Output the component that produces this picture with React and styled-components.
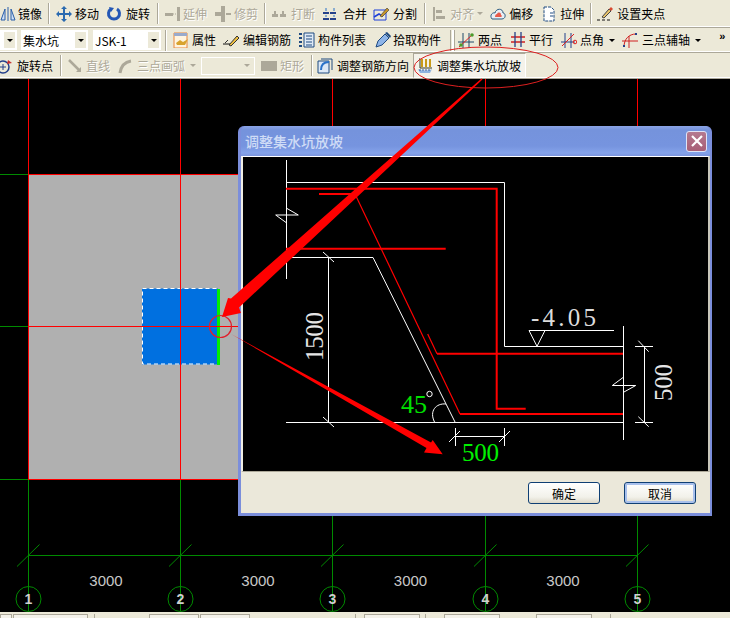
import React from "react";
import styled, { createGlobalStyle, css } from "styled-components";

const Global = createGlobalStyle`
  html, body { margin: 0; padding: 0; background: #000; }
  body { font-family: "Noto Sans CJK SC", "Liberation Sans", sans-serif; font-size: 12px; }
`;

const Page = styled.div`
  position: relative;
  width: 730px;
  height: 618px;
  overflow: hidden;
  display: flex;
  flex-direction: column;
  background: #ece9d8;
`;

const ToolRow = styled.div`
  display: flex;
  align-items: center;
  box-sizing: border-box;
  height: ${p => p.$h}px;
  flex: none;
  background: #ece9d8;
  border-bottom: 1px solid #aca899;
  box-shadow: inset 0 -1px 0 #fff;
  white-space: nowrap;
  overflow: hidden;
`;

const Tool = styled.div`
  display: flex;
  align-items: center;
  flex: none;
  height: 18px;
  margin-left: ${p => p.$ml || 0}px;
  gap: ${p => p.$gap || 3}px;
  line-height: 18px;
  color: ${p => (p.$off ? "#aca899" : "#000")};
  text-shadow: ${p => (p.$off ? "1px 1px 0 #fff" : "none")};
`;

const Pressed = styled(Tool)`
  height: 25px;
  width: 113px;
  box-sizing: border-box;
  padding-left: 3px;
  background: #f4f2ea;
  border: 1px solid;
  border-color: #aca899 #fff #fff #aca899;
`;

const Sep = styled.div`
  flex: none;
  width: ${p => (p.$double ? 4 : 2)}px;
  height: 21px;
  margin-left: ${p => p.$ml || 0}px;
  box-sizing: border-box;
  border-left: 1px solid #aca899;
  border-right: ${p => (p.$double ? "2px" : "1px")} solid #fff;
  ${p => p.$double && css`box-shadow: 1px 0 0 #aca899;`}
`;

const Combo = styled.div`
  flex: none;
  display: flex;
  align-items: center;
  justify-content: space-between;
  box-sizing: border-box;
  margin-left: ${p => p.$ml || 0}px;
  width: ${p => p.$w}px;
  height: ${p => (p.$off ? 18 : 20)}px;
  padding: 0 2px;
  background: ${p => (p.$off ? "#ece9d8" : "#fff")};
  border: ${p => (p.$off ? "1px solid #fff" : "none")};
  font-size: 12px;
`;

const DropCell = styled.span`
  flex: none;
  width: 11px;
  height: 16px;
  display: flex;
  align-items: center;
  justify-content: center;
  background: ${p => (p.$off ? "transparent" : "#ece9d8")};
`;

const Caret = styled.span`
  flex: none;
  width: 0;
  height: 0;
  margin-left: ${p => p.$ml || 0}px;
  border-left: 3px solid transparent;
  border-right: 3px solid transparent;
  border-top: 3px solid ${p => (p.$off ? "#aca899" : "#000")};
`;

const Chevrons = styled.span`
  flex: none;
  margin-left: ${p => p.$ml}px;
  margin-top: -8px;
  font: bold 11px "Liberation Sans", sans-serif;
  letter-spacing: -1px;
`;

const IconBox = styled.svg`
  flex: none;
  width: 16px;
  height: 16px;
  display: block;
`;

const Canvas = styled.svg`
  display: block;
  flex: none;
  width: 730px;
  height: 533px;
  background: #000;
`;

const AxisLabel = styled.text`
  font: 15px "Liberation Sans", sans-serif;
  fill: #c8c8c8;
  text-anchor: middle;
`;

const AxisNum = styled.text`
  font: bold 14px "Liberation Sans", sans-serif;
  fill: #cfcfcf;
  text-anchor: middle;
`;

const StatusBar = styled.div`
  flex: 1;
  display: flex;
  align-items: flex-start;
  padding-top: 2px;
  background: #ece9d8;
`;

const StatusCell = styled.div`
  flex: none;
  margin-left: ${p => p.$ml}px;
  width: ${p => p.$w}px;
  height: 10px;
  box-sizing: border-box;
  border: 1px solid #aca899;
  background: #f4f2ea;
`;

const StatusSep = styled.div`
  flex: none;
  margin-left: ${p => p.$ml}px;
  width: 1px;
  height: 10px;
  background: #aca899;
`;

const Dialog = styled.div`
  position: absolute;
  left: 238px;
  top: 126px;
  width: 474px;
  height: 390px;
  box-sizing: border-box;
  display: flex;
  flex-direction: column;
  border: solid #7b8edb;
  border-width: 0 2px 3px 3px;
  border-radius: 6px 6px 0 0;
  background: #7b8edb;
`;

const TitleBar = styled.div`
  flex: none;
  height: 30px;
  box-sizing: border-box;
  padding: 0 3px 0 4px;
  display: flex;
  align-items: center;
  justify-content: space-between;
  border-radius: 5px 5px 0 0;
  background: linear-gradient(#8ba4e6 0, #7593dc 4px, #7694df 20px, #85a3ea 27px, #7b94dd 30px);
`;

const TitleText = styled.span`
  font-size: 14px;
  font-weight: 500;
  color: #cfdcf6;
`;

const CloseBtn = styled.button`
  width: 21px;
  height: 21px;
  padding: 0;
  display: flex;
  align-items: center;
  justify-content: center;
  border: 1px solid #dfe4f6;
  border-radius: 3px;
  background: linear-gradient(#b47a90, #a85f76);
`;

const Frame = styled.div`
  flex: none;
  border: solid #f0eee4;
  border-width: 1px 2px;
  border-top-color: #fff;
  border-bottom-color: #aca899;
  border-right-color: #c8c6ba;
  line-height: 0;
`;

const Drawing = styled.svg`
  display: block;
  width: 465px;
  height: 314px;
  background: #000;
`;

const DimText = styled.text`
  font-family: "Liberation Serif", serif;
  font-size: ${p => p.$size}px;
  fill: ${p => p.$fill};
`;

const Footer = styled.div`
  flex: 1;
  display: flex;
  justify-content: flex-end;
  gap: 24px;
  padding: 10px 14px 0 0;
  background: #ebe8da;
`;

const Btn = styled.button`
  width: 72px;
  height: 22px;
  padding: 0;
  box-sizing: border-box;
  border: 1px solid #0f3f74;
  border-radius: 3px;
  font: 12px "Noto Sans CJK SC", sans-serif;
  color: #000;
  background: linear-gradient(#fff, #f2f1ea 70%, #dcd8c8);
  ${p => p.$focus && css`box-shadow: inset 0 0 0 2px #a8c0ec;`}
`;

const Overlay = styled.svg`
  position: absolute;
  left: 0;
  top: 0;
  width: 730px;
  height: 618px;
  pointer-events: none;
`;

const S = ({ children }) => <IconBox viewBox="0 0 16 16">{children}</IconBox>;
const off = "#aca899";

const icons = {
  mirror: <S><path d="M1 14 5 3v11zM15 14 11 3v11z" fill="#cfe0f6" stroke="#2a5fa8" /><path d="M8 1v14" stroke="#2a5fa8" /></S>,
  move: <S><path d="M8 1v14M1 8h14" stroke="#2a6ab0" strokeWidth="2" /><path d="M8 0l3 3H5zM8 16l3-3H5zM0 8l3-3v6zM16 8l-3-3v6z" fill="#2a6ab0" /></S>,
  rotate: <S><path d="M11 3a5.5 5.5 0 1 1-6 0" fill="none" stroke="#2457b5" strokeWidth="3" /><path d="M3 1l5 1-3 4z" fill="#2457b5" /></S>,
  extend: <S><path d="M0 7h8v3H0z" fill={off} /><path d="M12 1h3v14h-3z" fill={off} /><path d="M8 8h3" stroke={off} strokeDasharray="1 1" /></S>,
  trim: <S><path d="M6 0h4v16H6z" fill={off} /><path d="M0 6h6v4H0zM11 7h5v2h-5z" fill={off} /></S>,
  cut: <S><path d="M1 8h6v3H1zM9 8h6v3H9z" fill={off} /><path d="M3 5h2v3H3zM11 5h2v3h-2z" fill={off} /></S>,
  merge: <S><path d="M1 7h14M1 13h14" stroke="#25418a" strokeWidth="2" strokeDasharray="6 1" /><path d="M4 2v3M12 2v3M4 9v2M12 9v2" stroke="#2a72c8" /></S>,
  split: <S><path d="M1 4h12v10H1z" fill="none" stroke="#1c3fd8" /><path d="M1 11l5-3 3 2 5-6" fill="none" stroke="#1c3fd8" strokeWidth="1.5" /><path d="M7 10l7-8 2 2-7 7z" fill="#c8962a" stroke="#333" strokeWidth=".6" /></S>,
  align: <S><path d="M2 1h2v14H2z" fill={off} /><path d="M5 4h6v3H5zM5 10h9v3H5z" fill={off} /></S>,
  offset: <S><path d="M2 13c-3-4 1-7 3-6 1-5 8-5 8 0 3 0 3 6-1 6z" fill="#e8eef4" stroke="#2a5a80" /><path d="M5 11c0-2 1-3 2-3 1-2 4-2 4 1 1 0 1 2 0 2z" fill="#e85a4a" /></S>,
  stretch: <S><path d="M3 1h7l3 3v11H3z" fill="#fff" stroke="#1f4a80" strokeDasharray="3 1" /><path d="M9 7h3M9 10h3" stroke="#1f4a80" /></S>,
  grip: <S><path d="M0 14h3M5 14h3M10 14h3" stroke="#111" /><path d="M5 11l7-8 2 2-7 7z" fill="#e8c46a" stroke="#444" /><path d="M12 3l2-2 2 2-2 2z" fill="#d84a30" /></S>,
  props: <S><path d="M1 1h13v15H1z" fill="#fff4df" stroke="#e8863a" /><path d="M1 1h13v3H1z" fill="#9ac" /><path d="M3 11l4-3 3 2 5-3-3 6H4z" fill="#d8a32e" /></S>,
  editbar: <S><path d="M0 12h9" stroke="#111" /><path d="M2 11l3-3M6 13l8-9 2 2-8 8z" stroke="#333" fill="#f0c040" /></S>,
  list: <S><path d="M5 1h10v14H5z" fill="#dfeaf6" stroke="#1f4a80" /><path d="M7 4h6M7 7h6M7 10h6M7 13h6" stroke="#1f4a80" /><path d="M0 2h3M0 6h3M0 10h3M0 14h3" stroke="#1f4a80" strokeWidth="2" /></S>,
  dropper: <S><path d="M1 15l2-6 7-7 4 4-7 7z" fill="#8db4e8" stroke="#1f4a80" /><path d="M10 1l2-1 4 4-1 2z" fill="#1f4a80" /></S>,
  twopt: <S><path d="M0 10h16M5 1v15M11 1v15" stroke="#1f4a6a" /><path d="M1 15 15 2" stroke="#e02020" /><circle cx="14" cy="3" r="1.8" fill="#4c9a2a" /><circle cx="3" cy="13" r="1.8" fill="#4c9a2a" /></S>,
  para: <S><path d="M1 5h14M1 10h14" stroke="#d02020" strokeWidth="1.3" /><path d="M5 0v15M11 0v15" stroke="#24408a" strokeWidth="1.3" /></S>,
  angle: <S><path d="M0 10h14M4 1v15M10 1v15" stroke="#24408a" /><path d="M1 14 13 2" stroke="#e02020" /><circle cx="14" cy="10" r="1.8" fill="none" stroke="#e02020" /></S>,
  threept: <S><path d="M0 9h16M7 4v12" stroke="#d02020" /><path d="M2 15C2 7 7 2 14 2" fill="none" stroke="#d02020" /><rect x="1" y="13" width="2" height="2" fill="#24408a" /><rect x="13" y="1" width="2" height="2" fill="#24408a" /></S>,
  rotpt: <S><circle cx="6" cy="9" r="6" fill="none" stroke="#24408a" strokeWidth="1.5" /><path d="M3 9h6M6 6v6" stroke="#24408a" /><path d="M11 2l4 3-5 1z" fill="#c83030" /></S>,
  line: <S><path d="M2 2l10 10" stroke={off} strokeWidth="2.5" /><path d="M14 14H9l5-5z" fill={off} /></S>,
  arc: <S><path d="M2 15C3 8 7 4 13 3" fill="none" stroke={off} strokeWidth="3" /></S>,
  rect: <S><path d="M0 3h16v10H0z" fill={off} /></S>,
  rebar: <S><path d="M1 3h11v12H1z" fill="#dce8f6" stroke="#1f4a80" /><path d="M4 1h11v11" fill="none" stroke="#1f4a80" /><path d="M4 12c0-6 3-8 8-8" fill="none" stroke="#2a72c8" strokeWidth="2" /></S>,
  pit: <S><path d="M4 1h2v8H4zM8 1h2v8H8zM12 1h2v8h-2z" fill="#c89a18" /><path d="M2 1h1v9h12" fill="none" stroke="#3a3a20" /><path d="M1 11c3 2 11 2 14 0l-2 4H3z" fill="#8fb4e0" /><path d="M2 12h12" stroke="#2a5aa8" strokeDasharray="2 1" /></S>,
};

const T = ({ i, children, ...rest }) => (
  <Tool {...rest}>
    {icons[i]}
    {children && <span>{children}</span>}
  </Tool>
);

const Toolbars = () => (
  <>
    <ToolRow $h={28}>
      <T i="mirror" $gap={2}>镜像</T>
      <Sep $ml={6} />
      <T i="move" $ml={6}>移动</T>
      <T i="rotate" $ml={7} $gap={4}>旋转</T>
      <Sep $ml={7} />
      <T i="extend" $ml={6} $gap={2} $off>延伸</T>
      <T i="trim" $ml={8} $off>修剪</T>
      <Sep $ml={6} />
      <T i="cut" $ml={5} $gap={4} $off>打断</T>
      <T i="merge" $ml={7} $gap={5}>合并</T>
      <T i="split" $ml={6} $gap={4}>分割</T>
      <Sep $ml={7} />
      <T i="align" $ml={5} $off>对齐</T>
      <Caret $ml={3} $off />
      <T i="offset" $ml={7}>偏移</T>
      <T i="stretch" $ml={8}>拉伸</T>
      <Sep $ml={6} />
      <T i="grip" $ml={5} $gap={4}>设置夹点</T>
    </ToolRow>
    <ToolRow $h={25}>
      <Combo $w={17}><span /><DropCell><Caret /></DropCell></Combo>
      <Combo $ml={4} $w={67}><span>集水坑</span><DropCell><Caret /></DropCell></Combo>
      <Combo $ml={5} $w={68}><span>JSK-1</span><DropCell><Caret /></DropCell></Combo>
      <Sep $ml={4} />
      <T i="props" $ml={6}>属性</T>
      <T i="editbar" $ml={7} $gap={4}>编辑钢筋</T>
      <T i="list" $ml={8}>构件列表</T>
      <T i="dropper" $ml={9} $gap={2}>拾取构件</T>
      <Sep $ml={9} $double />
      <T i="twopt" $ml={4} $gap={4}>两点</T>
      <T i="para" $ml={8}>平行</T>
      <T i="angle" $ml={8}>点角</T>
      <Caret $ml={5} />
      <T i="threept" $ml={7} $gap={4}>三点辅轴</T>
      <Caret $ml={5} />
      <Chevrons $ml={18}>»</Chevrons>
    </ToolRow>
    <ToolRow $h={26}>
      <T i="rotpt" $ml={-3} $gap={4}>旋转点</T>
      <Sep $ml={7} />
      <T i="line" $ml={5} $off>直线</T>
      <T i="arc" $ml={8} $off>三点画弧</T>
      <Caret $ml={5} $off />
      <Combo $ml={5} $w={54} $off><span /><DropCell $off><Caret $off /></DropCell></Combo>
      <T i="rect" $ml={6} $off>矩形</T>
      <Sep $ml={7} />
      <T i="rebar" $ml={4} $gap={4}>调整钢筋方向</T>
      <Pressed $ml={4} $gap={4}>{icons.pit}<span>调整集水坑放坡</span></Pressed>
    </ToolRow>
  </>
);

const axes = [28.5, 180.5, 332.5, 485.5, 637.5];
const spans = [106, 258, 410.5, 563];

const Plan = () => (
  <Canvas viewBox="0 79 730 533">
    <g stroke="#008a00" fill="none">
      {[174.5, 326.5, 479.5].map(y => <path key={y} d={`M0 ${y}H28`} />)}
      {axes.map((x, i) => (
        <g key={x}>
          <path d={`M${x} 479V611`} />
          <path d={`M${x - 11.5} 566.5 L${x + 11} 544.5`} />
          <circle cx={x} cy="599" r="12.5" />
        </g>
      ))}
      <path d="M28 555.5H638" />
    </g>
    <rect x="28.5" y="174.5" width="240" height="305" fill="#b0b0b0" stroke="#ff0000" />
    <rect x="142" y="288.5" width="76" height="76" fill="#0070e0" />
    <rect x="142.5" y="288.5" width="75" height="75.5" fill="none" stroke="#fff" strokeDasharray="4 3" />
    <rect x="217" y="289" width="3" height="76" fill="#00f000" />
    <g stroke="#ff0000" fill="none">
      {axes.map(x => <path key={x} d={`M${x} 79V174`} />)}
      <path d="M180.5 174V479M28 326.5H270" />
    </g>
    {spans.map(x => <AxisLabel key={x} x={x} y="586">3000</AxisLabel>)}
    {axes.map((x, i) => <AxisNum key={x} x={x} y="604">{i + 1}</AxisNum>)}
  </Canvas>
);

const Section = () => (
  <Drawing viewBox="243 157 465 314">
    <g stroke="#fff" fill="none">
      <path d="M286.5 160V279M286 182.5H504.5V346.5H623.5M623.5 326V440M286 422.5H623" />
      <path d="M286 257.5H373L455 422M328.5 257V422" />
      <path d="M323 252L334 262M323 417L334 427" />
      <path d="M286.7 208.3L298.3 215H275.7L286.3 222.7" />
      <path d="M623.3 377.3L612.3 385.5H635.7L624 392" />
      <path d="M644.5 346V422M635 346.5H653M635 422.5H653M638.3 340.7L648.7 351.7M638.3 416.7L648.7 426.7" />
      <path d="M529 330.5H614M529 330.5H545L537 346.3Z" />
      <path d="M455 436.5H504.5M455.5 428V446M504.5 428V446M449 442L460 431M499 442L510 431" />
      <path d="M434.5 422C429 411 436 403 446 404" />
      <circle cx="429.5" cy="394" r="2.7" />
    </g>
    <g stroke="#ff0000" fill="none">
      <path strokeWidth="2" d="M286 188.7H496.7V408.7H525.7M319 194H355M286 248.7H445.7" />
      <path strokeWidth="1.2" d="M355 194L460 414M427.7 334L437 353.7" />
      <path strokeWidth="2" d="M460 414H623M437 353.7H623" />
    </g>
    <DimText $size={25} $fill="#dcdcdc" x="531" y="326" textLength="65" lengthAdjust="spacing">-4.05</DimText>
    <DimText $size={25} $fill="#e6e6e6" transform="translate(323 361) rotate(-90)" textLength="49" lengthAdjust="spacing">1500</DimText>
    <DimText $size={25} $fill="#e6e6e6" transform="translate(672 401) rotate(-90)" textLength="37" lengthAdjust="spacing">500</DimText>
    <DimText $size={26} $fill="#00e000" x="401" y="413">45</DimText>
    <DimText $size={25} $fill="#00f000" x="462" y="461" textLength="37" lengthAdjust="spacing">500</DimText>
  </Drawing>
);

const Annotations = () => (
  <Overlay viewBox="0 0 730 618">
    <ellipse cx="486" cy="67.5" rx="72" ry="20.5" fill="none" stroke="#dd2020" />
    <circle cx="220.5" cy="326.5" r="11" fill="none" stroke="#e0202c" strokeWidth="1.2" />
    <path fill="#ff0000" d="M482.5 79.5L364 190.6L239 307.5L241 313L222 317L228 298L231 298.6L359.4 185.4L481.5 78.5Z" />
    <path fill="#ff0000" d="M231 334L431 442.5L432.7 440L442.7 454.3L424 452.5L426.5 448Z" />
  </Overlay>
);

export default function App() {
  return (
    <Page>
      <Global />
      <Toolbars />
      <Plan />
      <StatusBar>
        <StatusCell $ml={0} $w={12} />
        <StatusCell $ml={1} $w={75} />
        <StatusSep $ml={6} />
        <StatusCell $ml={54} $w={50} />
        <StatusCell $ml={1} $w={50} />
        <StatusSep $ml={105} />
        <StatusCell $ml={8} $w={56} />
        <StatusSep $ml={5} />
        <StatusCell $ml={18} $w={56} />
        <StatusCell $ml={36} $w={56} />
        <StatusSep $ml={18} />
      </StatusBar>
      <Dialog>
        <TitleBar>
          <TitleText>调整集水坑放坡</TitleText>
          <CloseBtn aria-label="关闭">
            <svg width="12" height="12" viewBox="0 0 12 12"><path d="M1 1l10 10M11 1L1 11" stroke="#fff" strokeWidth="2.2" /></svg>
          </CloseBtn>
        </TitleBar>
        <Frame><Section /></Frame>
        <Footer>
          <Btn>确定</Btn>
          <Btn $focus>取消</Btn>
        </Footer>
      </Dialog>
      <Annotations />
    </Page>
  );
}
